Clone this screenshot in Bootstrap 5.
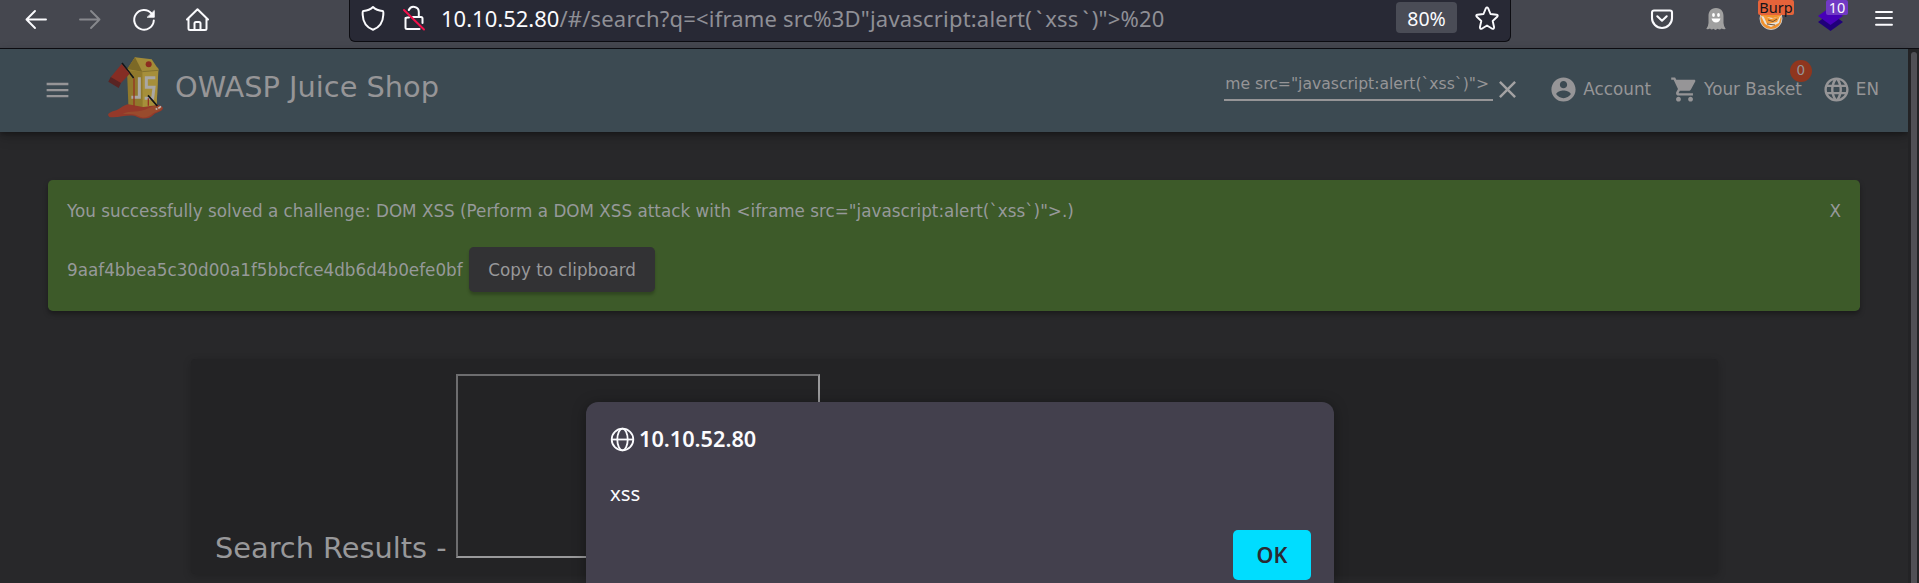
<!DOCTYPE html>
<html lang="en">
<head>
<meta charset="utf-8">
<meta name="viewport" content="width=device-width, initial-scale=1">
<title>OWASP Juice Shop</title>
<link href="https://cdn.jsdelivr.net/npm/bootstrap@5.3.0/dist/css/bootstrap.min.css" rel="stylesheet">
<style>
  body { height: 583px; background: #28282a; font-family: "DejaVu Sans", sans-serif; font-size: 16.8px; line-height: 1.2; color: #959597; }
  svg { display: block; flex: none; }
  .browser-bar { height: 49px; background: #45474f; border-bottom: 1px solid #0d0d12; font-family: "Noto Sans", sans-serif; color: #fbfbfe; padding-left: 24px; padding-right: 26px; }
  .nav-icons { height: 39px; gap: 30px; width: 325px; }
  .url-box { width: 1162px; height: 42px; background: #282935; border: 1px solid #0d0d12; border-top: 0; border-radius: 0 0 6px 6px; padding: 0 11px 6px 11px; }
  .url-text { font-size: 22px; line-height: 30px; margin-left: 14px; color: #8f8f96; white-space: pre; padding-top: 1px; letter-spacing: .19px; }
  .url-text .host { color: #fbfbfe; letter-spacing: 0; }
  .url-text .tick { letter-spacing: 3px; margin-left: 4px; }
  .zoom-pill { width: 61px; height: 31px; background: #4a4c56; border-radius: 4px; font-size: 19.5px; line-height: 33px; }
  .ext-icons { height: 37px; }
  .ext-badge { font-size: 14.5px; line-height: 15px; height: 15px; border-radius: 2px; top: 0; }
  .app-area { height: 534px; }
  .app-bar { height: 83px; background: #3c4a52; box-shadow: 0 2px 5px rgba(0,0,0,.3), 0 5px 12px rgba(0,0,0,.2); padding: 0 29px 3px 43px; color: #969597; }
  .app-logo { margin: 0 0 4px 34px; }
  .app-title { font-size: 28.8px; margin-left: 9px; line-height: 36px; padding-bottom: 4px; }
  .search-field { width: 269px; height: 31px; border-bottom: 2px solid #969597; font-size: 15.6px; line-height: 22px; white-space: nowrap; margin-bottom: 8px; padding: 3px 0 0 1px; }
  .basket-count { width: 22px; height: 22px; right: -10px; top: -15px; background: #8f361e; font-size: 13.5px; }
  .scroll-track { width: 11px; background: #232325; padding: 3px 2px 0 3px; }
  .scroll-thumb { background: #505055; border-radius: 3px 3px 0 0; }
  .solved { margin: 48px 48px 0; height: 131px; background: #3d5a29; border-radius: 4.8px; padding: 21px 19px 0; box-shadow: 0 3px 5px rgba(0,0,0,.35); color: #96999a; }
  .copy-btn { width: 186px; height: 45px; background: #323234; border-radius: 4.8px; color: #98989a; font-size: 16.8px; padding: 1px 0 0 1px; box-shadow: 0 3px 3px rgba(0,0,0,.22); }
  .results { width: 1527px; height: 215px; margin: 48px 0 0 191px; background: #232325; box-shadow: 0 2px 8px rgba(0,0,0,.2); padding: 15px 24px 0; font-size: 28.8px; line-height: 1; color: #98989a; border-radius: 4px; }
  .frame-box { display: inline-block; width: 364px; height: 184px; border: 2px solid; border-color: #6d6d6f #99999b #99999b #6d6d6f; }
  .alert-dialog { left: 586px; top: 402px; width: 748px; height: 181px; background: #43404d; border-radius: 12px 12px 0 0; box-shadow: 0 2px 14px rgba(0,0,0,.35); font-family: "Noto Sans", sans-serif; color: #fbfbfe; padding: 20px 23px 3px 24px; }
  .dialog-host { font-size: 21.7px; font-weight: 600; line-height: 34px; margin-left: 4px; }
  .dialog-text { font-size: 20.4px; line-height: 28px; margin-top: 23px; }
  .ok-btn { width: 78px; height: 50px; background: #00ddff; color: #2b2a33; border-radius: 5px; font-size: 21.5px; font-weight: 600; }
</style>
</head>
<body class="overflow-hidden position-relative">

<header class="browser-bar d-flex align-items-start">
  <div class="nav-icons d-flex align-items-center">
    <svg width="24" height="24" viewBox="0 0 24 24" fill="none" stroke="#fbfbfe" stroke-width="1.9" stroke-linecap="round" stroke-linejoin="round"><path d="M22 11.500H2.500M11 3L2.500 11.500L11 20"/></svg>
    <svg width="24" height="24" viewBox="0 0 24 24" fill="none" stroke="#87888d" stroke-width="1.9" stroke-linecap="round" stroke-linejoin="round"><path d="M2 11.500H21.500M13 3l8.500 8.500L13 20"/></svg>
    <svg width="24" height="24" viewBox="0 0 24 24" fill="none" stroke="#fbfbfe" stroke-width="2" stroke-linecap="round"><path d="M19.500 5.500A9.800 9.800 0 1 0 21.800 12.500"/><path d="M22.300 2.800V9.300H15.500Z" fill="#fbfbfe" stroke-width=".8" stroke-linejoin="round"/></svg>
    <svg width="24" height="24" viewBox="0 0 24 24" fill="none" stroke="#fbfbfe" stroke-width="2" stroke-linecap="round" stroke-linejoin="round"><path d="M1 11.500L11.500 1.200L22 11.500M2.500 10.500V20.500a1.500 1.500 0 0 0 1.500 1.500H19a1.500 1.500 0 0 0 1.500-1.500V10.500M8.500 22V15.500a1.500 1.500 0 0 1 1.500-1.500h3a1.500 1.500 0 0 1 1.500 1.500V22"/></svg>
  </div>
  <div class="url-box d-flex align-items-center">
    <svg width="24" height="26" viewBox="0 0 24 26" fill="none" stroke="#fbfbfe" stroke-width="2" stroke-linejoin="round"><path d="M12 2C9.500 4.500 5.500 5.800 2.500 6C1.200 6.100 1.700 8 1.700 10C2 17 6 22.500 12 24.800C18 22.500 22 17 22.300 10C22.300 8 22.800 6.100 21.500 6C18.500 5.800 14.500 4.500 12 2Z"/></svg>
    <svg class="ms-3" width="26" height="26" viewBox="0 0 26 26" fill="none" stroke="#fbfbfe" stroke-width="2" stroke-linecap="round"><path d="M7.800 5A5.200 5.200 0 0 1 17.800 7V12M4.500 13V22.500A1.500 1.500 0 0 0 6 24H18.500M12 12H20A1.500 1.500 0 0 1 21.500 13.500V18M4.500 14.500A2 2 0 0 1 6.500 12.500H8"/><path d="M3 5L23 24.500" stroke="#f5114c"/></svg>
    <div class="url-text"><span class="host">10.10.52.80</span>/#/search?q=&lt;iframe src%3D"javascript:alert(<span class="tick">`</span>xss<span class="tick">`</span>)"&gt;%20</div>
    <div class="zoom-pill ms-auto text-center">80%</div>
    <svg style="margin-left:18px" width="24" height="26" viewBox="0 0 24 26" fill="none" stroke="#fbfbfe" stroke-width="1.900" stroke-linejoin="round"><path d="M10.900 3.200Q12 1.500 13.100 3.200L15.500 9L21.700 9.700Q23.500 10.300 22.200 11.800L17.700 16L19.100 22.300Q19 24.300 17.200 23.700L12 20.500L6.800 23.700Q5 24.300 4.900 22.300L6.300 16L1.800 11.800Q.5 10.300 2.300 9.700L8.500 9Z"/></svg>
  </div>
  <div class="ext-icons d-flex align-items-center ms-auto">
    <svg width="24" height="24" viewBox="0 0 24 24" fill="none" stroke="#fbfbfe" stroke-width="2.100" stroke-linecap="round" stroke-linejoin="round"><path d="M4 3.500H20A2 2 0 0 1 22 5.500V11A10 10 0 0 1 2 11V5.500A2 2 0 0 1 4 3.500ZM7.300 9.300L12 13.700L16.700 9.300"/></svg>
    <svg style="margin-left:32px" width="20" height="24" viewBox="0 0 20 24"><path d="M10 1C4.500 1 2.500 5 2.500 9V16Q2.300 19.500.3 22Q2.500 22.500 4 21.500Q5.500 23.500 7.500 21.800Q9.500 24 11.500 21.800Q14 23.500 15.500 21.500Q17.500 22.500 19.700 22Q17.700 19.500 17.500 16V9C17.500 5 15.500 1 10 1Z" fill="#a0a0a0"/><ellipse cx="7.500" cy="8" rx="1.400" ry="2" fill="#fff"/><ellipse cx="12.500" cy="8" rx="1.400" ry="2" fill="#fff"/><path d="M5.500 11.500H14.500Q13.500 15.500 10 15.500Q6.500 15.500 5.500 11.500Z" fill="#fff"/></svg>
    <div class="position-relative h-100 d-flex align-items-center" style="margin-left:33px">
      <svg width="24" height="24" viewBox="0 0 24 24"><circle cx="12" cy="11.500" r="11" fill="#f0902c" stroke="#c8c8c8" stroke-width="1"/><path d="M2 9L6 17L12 20L20 16L22 9L14 11L8 10Z" fill="#e9e3da"/><path d="M4 8L8 17L18 15L21 9L12 12Z" fill="#f59a36"/><path d="M9 13L14 14.500L18 12M8 17L16 18" stroke="#735339" fill="none"/></svg>
      <span class="ext-badge position-absolute text-center" style="left:-1px;width:36px;background:#e5633a;color:#15141a">Burp</span>
    </div>
    <div class="position-relative h-100 d-flex align-items-center" style="margin-left:35px">
      <svg width="25" height="24" viewBox="0 0 25 24"><path d="M0 15L12.500 6L25 15L12.500 24Z" fill="#20007a"/><path d="M0 9L12.500 0L25 9L12.500 18Z" fill="#4700b8"/></svg>
      <span class="ext-badge position-absolute text-center" style="left:8px;width:22px;background:#7139c4">10</span>
    </div>
    <svg style="margin-left:32px" width="18" height="24" viewBox="0 0 18 24" stroke="#fbfbfe" stroke-width="1.900" stroke-linecap="round"><path d="M1 5H17M1 11H17M1 17.800H17"/></svg>
  </div>
</header>

<div class="app-area d-flex">
  <div class="flex-grow-1">
    <nav class="app-bar d-flex align-items-center">
      <svg width="29" height="29" viewBox="0 0 24 24" fill="#969597"><path d="M3 18.500h18v-2H3v2zm0-5h18v-2H3v2zm0-7v2h18v-2H3z"/></svg>
      <svg class="app-logo" width="60" height="65" viewBox="50 30 180 195">
        <path d="M56 210C60 198 78 200 92 190C100 184 110 178 120 177L190 180C205 177 220 182 221 190C218 202 202 200 192 210C180 222 160 224 142 215C120 205 90 220 60 216Z" fill="#94392a"/>
        <path d="M100 206C120 195 150 205 180 188C195 180 210 180 218 188C212 200 198 198 188 208C175 219 160 220 145 212C130 204 115 208 100 206Z" fill="#994b2d"/>
        <path d="M113 75L137 37L207 69L202 180L160 186L117 178Z" fill="#90792c"/>
        <path d="M137 37L187 43L209 76L159 80L113 75Z" fill="#a28b38"/>
        <path d="M159 80L207 76L202 180L160 186Z" fill="#a68f3a"/>
        <path d="M137 37L159 80L113 72Z" fill="#7c6926"/>
        <path d="M159 80L207 76" stroke="#75662c" stroke-width="2"/>
        <circle cx="178" cy="58" r="9" fill="#8c2c20"/>
        <path d="M150 97V157H126M198 98H171V127H194L190 160H166" fill="none" stroke="#a9a7a5" stroke-width="9"/>
        <path d="M134 100V184M177 160V182" stroke="#963323" stroke-width="4"/>
        <path d="M98 54L133 99M176 151L204 183" stroke="#131518" stroke-width="5"/>
        <path d="M97 57L64 97L93 116L121 86Z" fill="#852d24"/><path d="M64 96L57 110L88 129L95 114Z" fill="#592423"/>
        <path d="M207 190L215 184M199 193L204 191" stroke="#bdbbb9" stroke-width="5"/>
      </svg>
      <div class="app-title">OWASP Juice Shop</div>
      <div class="search-field ms-auto">me src="javascript:alert(`xss`)"&gt;</div>
      <svg width="29" height="29" viewBox="0 0 24 24" fill="#a3a2a3"><path d="M19 6.410L17.590 5 12 10.590 6.410 5 5 6.410 10.590 12 5 17.590 6.410 19 12 13.410 17.590 19 19 17.590 13.410 12z"/></svg>
      <div class="d-flex align-items-center" style="margin-left:27px;gap:5px">
        <svg width="29" height="29" viewBox="0 0 24 24" fill="#969597"><path d="M12 2C6.480 2 2 6.480 2 12s4.480 10 10 10 10-4.480 10-10S17.520 2 12 2zm0 3c1.660 0 3 1.340 3 3s-1.340 3-3 3-3-1.340-3-3 1.340-3 3-3zm0 14.200c-2.500 0-4.710-1.280-6-3.220.03-1.990 4-3.080 6-3.080 1.990 0 5.970 1.090 6 3.080-1.290 1.940-3.500 3.220-6 3.220z"/></svg>
        <span>Account</span>
      </div>
      <div class="d-flex align-items-center position-relative" style="margin-left:19px;gap:5px">
        <svg width="29" height="29" viewBox="0 0 24 24" fill="#969597"><path d="M7 18c-1.100 0-1.990.9-1.990 2S5.900 22 7 22s2-.9 2-2-.9-2-2-2zM1 2v2h2l3.600 7.590-1.350 2.450c-.16.280-.25.610-.25.960 0 1.100.9 2 2 2h12v-2H7.420c-.14 0-.25-.11-.25-.25l.03-.12.900-1.630h7.450c.750 0 1.410-.41 1.750-1.030l3.580-6.490c.08-.14.120-.31.120-.48 0-.55-.45-1-1-1H5.210l-.94-2H1zm16 16c-1.100 0-1.990.9-1.990 2s.89 2 1.990 2 2-.9 2-2-.9-2-2-2z"/></svg>
        <span>Your Basket</span>
        <span class="basket-count position-absolute rounded-circle d-flex align-items-center justify-content-center">0</span>
      </div>
      <div class="d-flex align-items-center" style="margin-left:20px;gap:5px">
        <svg width="29" height="29" viewBox="0 0 24 24" fill="#969597"><path d="M11.990 2C6.470 2 2 6.480 2 12s4.470 10 9.990 10C17.520 22 22 17.520 22 12S17.520 2 11.990 2zm6.930 6h-2.950c-.32-1.250-.78-2.450-1.380-3.560 1.840.63 3.370 1.910 4.330 3.560zM12 4.040c.83 1.200 1.480 2.530 1.910 3.960h-3.820c.43-1.430 1.080-2.760 1.910-3.960zM4.260 14C4.100 13.360 4 12.690 4 12s.1-1.360.26-2h3.380c-.08.660-.14 1.320-.14 2s.06 1.340.14 2H4.260zm.82 2h2.950c.32 1.250.78 2.450 1.380 3.560-1.840-.63-3.370-1.900-4.330-3.560zm2.950-8H5.080c.96-1.660 2.490-2.930 4.330-3.560C8.810 5.550 8.350 6.750 8.030 8zM12 19.960c-.83-1.200-1.480-2.530-1.910-3.960h3.820c-.43 1.430-1.080 2.760-1.910 3.960zM14.340 14H9.660c-.09-.66-.16-1.320-.16-2s.07-1.350.16-2h4.680c.09.650.160 1.320.160 2s-.07 1.340-.16 2zm.25 5.560c.6-1.110 1.060-2.310 1.380-3.560h2.950c-.96 1.650-2.490 2.930-4.330 3.560zM16.360 14c.08-.66.140-1.320.140-2s-.06-1.340-.14-2h3.380c.160.640.260 1.310.260 2s-.1 1.360-.26 2h-3.380z"/></svg>
        <span>EN</span>
      </div>
    </nav>

    <section class="solved">
      <div class="d-flex justify-content-between">
        <span>You successfully solved a challenge: DOM XSS (Perform a DOM XSS attack with &lt;iframe src="javascript:alert(`xss`)"&gt;.)</span>
        <span>X</span>
      </div>
      <div class="d-flex align-items-center" style="margin-top:26px;gap:6px">
        <span>9aaf4bbea5c30d00a1f5bbcfce4db6d4b0efe0bf</span>
        <button class="copy-btn btn border-0">Copy to clipboard</button>
      </div>
    </section>

    <section class="results">
      <div class="text-nowrap">Search Results - <div class="frame-box"></div></div>
    </section>
  </div>
  <div class="scroll-track d-flex"><div class="scroll-thumb flex-grow-1"></div></div>
</div>

<div class="alert-dialog position-absolute d-flex flex-column" role="dialog">
  <div class="d-flex align-items-center">
    <svg width="25" height="25" viewBox="0 0 25 25" fill="none" stroke="#fbfbfe" stroke-width="1.800"><circle cx="12.500" cy="12.500" r="10.800"/><ellipse cx="12.500" cy="12.500" rx="5.200" ry="10.800"/><path d="M1.700 12.500H23.300"/></svg>
    <div class="dialog-host">10.10.52.80</div>
  </div>
  <div class="dialog-text">xss</div>
  <button class="ok-btn btn border-0 p-0 mt-auto align-self-end">OK</button>
</div>

<script src="https://cdn.jsdelivr.net/npm/bootstrap@5.3.0/dist/js/bootstrap.bundle.min.js"></script>
</body>
</html>
